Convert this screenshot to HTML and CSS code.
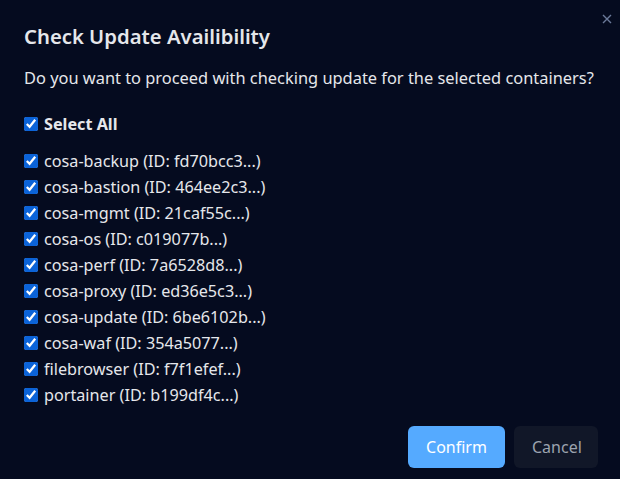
FILE: index.html
```html
<!DOCTYPE html>
<html lang="en">
<head>
<meta charset="utf-8">
<title>Check Update Availibility</title>
<link rel="stylesheet" href="styles.css">
</head>
<body>
<div class="dialog">
  <button class="close" aria-label="Close">
    <svg width="10" height="10" viewBox="0 0 10 10"><path d="M1 1L9 9M9 1L1 9" stroke="#6b7a99" stroke-width="1.4" fill="none"/></svg>
  </button>
  <h2 class="title">Check Update Availibility</h2>
  <p class="desc">Do you want to proceed with checking update for the selected containers?</p>
  <label class="row all"><input type="checkbox" checked> Select All</label>
  <div class="list">
    <label class="row"><input type="checkbox" checked> cosa-backup (ID: fd70bcc3...)</label>
    <label class="row"><input type="checkbox" checked> cosa-bastion (ID: 464ee2c3...)</label>
    <label class="row"><input type="checkbox" checked> cosa-mgmt (ID: 21caf55c...)</label>
    <label class="row"><input type="checkbox" checked> cosa-os (ID: c019077b...)</label>
    <label class="row"><input type="checkbox" checked> cosa-perf (ID: 7a6528d8...)</label>
    <label class="row"><input type="checkbox" checked> cosa-proxy (ID: ed36e5c3...)</label>
    <label class="row"><input type="checkbox" checked> cosa-update (ID: 6be6102b...)</label>
    <label class="row"><input type="checkbox" checked> cosa-waf (ID: 354a5077...)</label>
    <label class="row"><input type="checkbox" checked> filebrowser (ID: f7f1efef...)</label>
    <label class="row"><input type="checkbox" checked> portainer (ID: b199df4c...)</label>
  </div>
  <div class="actions">
    <button class="btn confirm">Confirm</button>
    <button class="btn cancel">Cancel</button>
  </div>
</div>
</body>
</html>
```
FILE: styles.css
```css
html, body {
  margin: 0;
  height: 100%;
  background: #050b1f;
}
body {
  font-family: "Noto Sans", "Open Sans", sans-serif;
  color: #e5e7eb;
}
.dialog {
  position: relative;
  display: flex;
  flex-direction: column;
  padding: 22px 22px 0 24px;
}
.close {
  position: absolute;
  top: 12px;
  right: 6px;
  width: 14px;
  height: 14px;
  padding: 0;
  border: 0;
  background: none;
  display: flex;
  align-items: center;
  justify-content: center;
}
.title {
  margin: 0;
  font-size: 20.3px;
  line-height: 28px;
  font-weight: 600;
  color: #e5e7eb;
}
.desc {
  margin: 16px 0 0;
  font-size: 16.4px;
  line-height: 24px;
}
.row {
  display: flex;
  align-items: center;
  gap: 6px;
  font-size: 16.2px;
  line-height: 26px;
  height: 26px;
}
.row input {
  margin: 0;
  width: 14px;
  height: 14px;
  accent-color: #0b63d8;
}
.all {
  margin-top: 21px;
  font-weight: 700;
}
.list {
  margin-top: 11px;
  display: flex;
  flex-direction: column;
}
.actions {
  margin-top: 18px;
  display: flex;
  justify-content: flex-end;
  gap: 9px;
}
.btn {
  height: 42px;
  border: 0;
  border-radius: 6px;
  font-family: inherit;
  font-size: 16px;
  padding: 0 18px;
}
.confirm {
  background: #55aaff;
  color: #ffffff;
  width: 97px;
}
.cancel {
  background: #111728;
  color: #9ca3af;
  width: 84px;
}
```
